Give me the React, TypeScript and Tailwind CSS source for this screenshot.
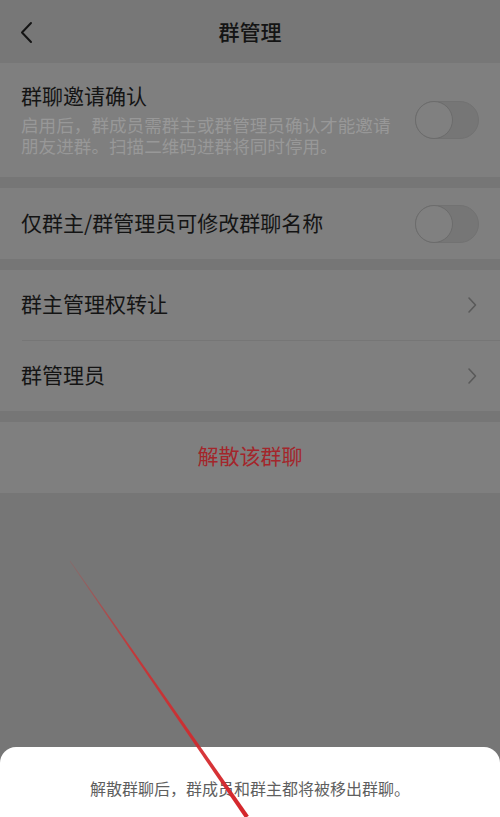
import React from "react";

const font = { fontFamily: '"Noto Sans CJK SC", "Noto Sans", sans-serif' };

function Toggle() {
  return (
    <div className="relative h-[38px] w-[64px] shrink-0 rounded-full border border-[#727272] bg-[#767676]">
      <div className="absolute left-[-1px] top-[-1px] h-[38px] w-[38px] rounded-full border border-[#6c6c6c] bg-[#808080]" />
    </div>
  );
}

function Chevron() {
  return (
    <svg width="12" height="18" viewBox="0 0 12 18" className="shrink-0">
      <path d="M3 2 L9.5 9 L3 16" fill="none" stroke="#5a5a5a" strokeWidth="1.6" strokeLinecap="round" strokeLinejoin="round" />
    </svg>
  );
}

export default function App() {
  return (
    <div className="relative h-[817px] w-[500px] overflow-hidden bg-[#767676]" style={font}>
      {/* header */}
      <div className="flex h-[63px] items-center justify-between bg-[#777777] px-[18px]">
        <svg width="16" height="24" viewBox="0 0 16 24">
          <path d="M13 3 L4 12.5 L13 22" fill="none" stroke="#141414" strokeWidth="2" strokeLinecap="round" strokeLinejoin="round" />
        </svg>
        <div className="pb-[2px] text-[21px] leading-[28px] font-medium text-[#141414]">群管理</div>
        <div className="w-[16px]" />
      </div>

      {/* card 1 */}
      <div className="flex h-[114px] items-center justify-between bg-[#7f7f7f] pl-[21px] pr-[21px]">
        <div className="flex flex-col pb-[4px]">
          <div className="text-[21px] leading-[28px] text-[#141414]">群聊邀请确认</div>
          <div className="mt-[5px] text-[17.6px] leading-[21px] text-[#989898]">
            <div>启用后，群成员需群主或群管理员确认才能邀请</div>
            <div>朋友进群。扫描二维码进群将同时停用。</div>
          </div>
        </div>
        <Toggle />
      </div>

      {/* card 2 */}
      <div className="mt-[11px] flex h-[71px] items-center justify-between bg-[#7f7f7f] pl-[21px] pr-[21px]">
        <div className="pb-[4px] text-[21px] leading-[28px] text-[#141414]">仅群主/群管理员可修改群聊名称</div>
        <Toggle />
      </div>

      {/* card 3 */}
      <div className="mt-[11px] bg-[#7f7f7f]">
        <div className="flex h-[70px] items-center justify-between pl-[21px] pr-[22px]">
          <div className="pb-[4px] text-[21px] leading-[28px] text-[#141414]">群主管理权转让</div>
          <Chevron />
        </div>
        <div className="ml-[22px] h-px bg-[#767676]" />
        <div className="flex h-[70px] items-center justify-between pl-[21px] pr-[22px]">
          <div className="pb-[4px] text-[21px] leading-[28px] text-[#141414]">群管理员</div>
          <Chevron />
        </div>
      </div>

      {/* card 4 */}
      <div className="mt-[11px] flex h-[71px] items-center justify-center bg-[#7f7f7f]">
        <div className="pb-[6px] text-[21px] leading-[28px] text-[#a3262b]">解散该群聊</div>
      </div>

      {/* bottom sheet */}
      <div className="absolute bottom-0 left-0 right-0 h-[70px] rounded-t-[16px] bg-white">
        <div className="pt-[30px] text-center text-[16px] leading-[22px] text-[#5f5f5f]">
          解散群聊后，群成员和群主都将被移出群聊。
        </div>
      </div>

      {/* red annotation line */}
      <svg className="pointer-events-none absolute left-0 top-0" width="500" height="817" viewBox="0 0 500 817">
        <defs>
          <linearGradient id="rl" x1="70" y1="561" x2="247" y2="817" gradientUnits="userSpaceOnUse">
            <stop offset="0" stopColor="#d42a2c" stopOpacity="0.15" />
            <stop offset="0.35" stopColor="#d42a2c" stopOpacity="0.8" />
            <stop offset="1" stopColor="#d4252a" stopOpacity="1" />
          </linearGradient>
        </defs>
        <polygon points="70.3,560.8 69.7,561.2 245.2,818.2 248.8,815.8" fill="url(#rl)" />
      </svg>
    </div>
  );
}
